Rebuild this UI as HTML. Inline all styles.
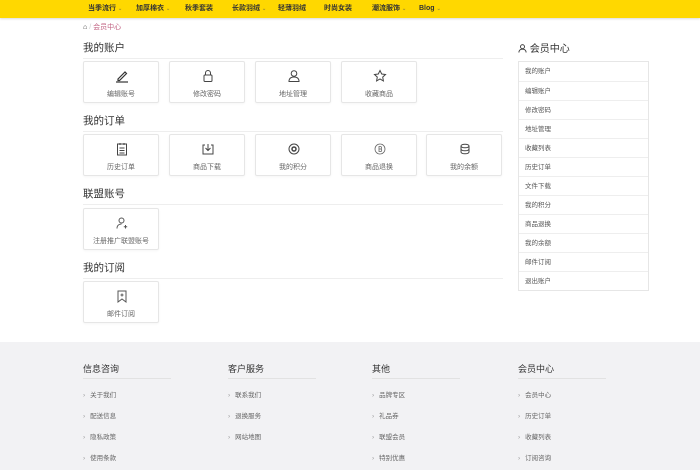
<!DOCTYPE html>
<html><head><meta charset="utf-8"><style>
*{margin:0;padding:0;box-sizing:border-box}
body{width:700px;height:470px;overflow:hidden;background:#fff;font-family:"Liberation Sans","Noto Sans CJK SC",sans-serif;color:#333;position:relative}
.nav{position:absolute;left:0;top:0;width:700px;height:18px;background:#ffd800;box-shadow:0 1px 2px rgba(0,0,0,.15)}
.nav span{position:absolute;top:4px;font-size:7px;font-weight:bold;color:#333;line-height:9px}
.nav span i{font-style:normal;color:#a08a30;font-size:5px;margin-left:2px}
.bc{position:absolute;left:83px;top:22px;font-size:7px;color:#c06080}
.h{position:absolute;left:83px;width:420px;font-size:10.5px;color:#333;border-bottom:1px solid #eee;padding-bottom:3px}
.card{position:absolute;width:76px;height:42px;border:1px solid #e6e6e6;border-radius:2px;box-shadow:0 1px 2px rgba(0,0,0,.04);text-align:center;font-size:7px;color:#666}
.card svg{position:absolute;left:31px;top:7px}
.card b{position:absolute;left:0;right:0;top:27px;font-weight:normal}
.side{position:absolute;left:518px;top:61px;width:131px;border:1px solid #e6e6e6}
.side div{height:19px;line-height:19px;border-top:1px solid #eee;font-size:6.5px;color:#555;padding-left:6px}
.side div:first-child{border-top:none}
.foot{position:absolute;left:0;top:342px;width:700px;height:128px;background:#f2f2f4}
.fc{position:absolute;top:20px;width:88px}
.fc h4{font-weight:normal;font-size:9px;color:#333;border-bottom:1px solid #e2e2e2;padding-bottom:6px;height:17px}
.fc p{font-size:6.5px;color:#666;margin-top:9px;height:12px;line-height:12px}
.fc p:first-of-type{margin-top:11px}
.fc p:before{content:"›";color:#999;margin-right:5px}
</style></head><body>
<div class="nav">
<span style="left:88px">当季流行<i>⌄</i></span>
<span style="left:136px">加厚棉衣<i>⌄</i></span>
<span style="left:185px">秋季套装</span>
<span style="left:232px">长款羽绒<i>⌄</i></span>
<span style="left:278px">轻薄羽绒</span>
<span style="left:324px">时尚女装</span>
<span style="left:372px">潮流服饰<i>⌄</i></span>
<span style="left:419px">Blog<i>⌄</i></span>
</div>
<div class="bc"><span style="color:#333">⌂</span> <span style="color:#ccc">/</span> 会员中心</div>

<div class="h" style="top:40px">我的账户</div>
<div class="card" style="left:83px;top:61px"><svg width="14" height="14" viewBox="0 0 14 14" fill="none" stroke="#333" stroke-width="1.2"><path d="M3 10l7-7 1.5 1.5-7 7H3z"/><path d="M1 13h12"/></svg><b>编辑账号</b></div>
<div class="card" style="left:169px;top:61px"><svg width="14" height="14" viewBox="0 0 14 14" fill="none" stroke="#444"><rect x="3" y="6" width="8" height="6.5" rx="1"/><path d="M4.5 6V4a2.5 2.5 0 015 0v2"/></svg><b>修改密码</b></div>
<div class="card" style="left:255px;top:61px"><svg width="14" height="14" viewBox="0 0 14 14" fill="none" stroke="#444"><circle cx="7" cy="4.5" r="2.8"/><path d="M2 12.5c0-3 2-4.5 5-4.5s5 1.5 5 4.5z"/></svg><b>地址管理</b></div>
<div class="card" style="left:341px;top:61px"><svg width="14" height="14" viewBox="0 0 14 14" fill="none" stroke="#444"><path d="M7 1.5l1.7 3.5 3.8.5-2.8 2.6.7 3.8L7 10l-3.4 1.9.7-3.8L1.5 5.5l3.8-.5z"/></svg><b>收藏商品</b></div>

<div class="h" style="top:113px">我的订单</div>
<div class="card" style="left:83px;top:134px"><svg width="14" height="14" viewBox="0 0 14 14" fill="none" stroke="#444"><rect x="2.5" y="2" width="9" height="11"/><path d="M5 1v2M9 1v2M4.5 6h5M4.5 8.5h5M4.5 11h5"/></svg><b>历史订单</b></div>
<div class="card" style="left:169px;top:134px"><svg width="14" height="14" viewBox="0 0 14 14" fill="none" stroke="#444"><path d="M4 3H2v9h10V3h-2"/><path d="M7 2v6M4.5 6L7 8.5 9.5 6"/></svg><b>商品下载</b></div>
<div class="card" style="left:255px;top:134px"><svg width="14" height="14" viewBox="0 0 14 14" fill="none" stroke="#444"><circle cx="7" cy="7" r="5"/><circle cx="7" cy="7" r="2" stroke-width="1.5"/></svg><b>我的积分</b></div>
<div class="card" style="left:341px;top:134px"><svg width="14" height="14" viewBox="0 0 14 14" fill="none" stroke="#666" stroke-width=".8"><circle cx="7" cy="7" r="5"/><path d="M6 4.5v5h1.5a1.2 1.2 0 000-2.5H6h1.3a1.2 1.2 0 000-2.5z"/></svg><b>商品退换</b></div>
<div class="card" style="left:426px;top:134px"><svg width="14" height="14" viewBox="0 0 14 14" fill="none" stroke="#444"><ellipse cx="7" cy="4" rx="4" ry="1.8"/><path d="M3 4v6c0 1 1.8 1.8 4 1.8s4-.8 4-1.8V4M3 7c0 1 1.8 1.8 4 1.8S11 8 11 7"/></svg><b>我的余额</b></div>

<div class="h" style="top:186px">联盟账号</div>
<div class="card" style="left:83px;top:208px"><svg width="14" height="14" viewBox="0 0 14 14" fill="none" stroke="#555"><circle cx="6.5" cy="4.5" r="2.5"/><path d="M2 12.5c0-3 2-4.5 4.5-4.5M10.5 9v3.5M8.8 10.8h3.4"/></svg><b>注册推广联盟账号</b></div>

<div class="h" style="top:260px">我的订阅</div>
<div class="card" style="left:83px;top:281px"><svg width="14" height="14" viewBox="0 0 14 14" fill="none" stroke="#555"><path d="M3 2h8v11L7 10l-4 3z"/><path d="M7 4.5v3M5.5 6h3"/></svg><b>邮件订阅</b></div>

<div style="position:absolute;left:518px;top:40px;font-size:10px;color:#333"><svg width="9" height="9" viewBox="0 0 10 10" fill="none" stroke="#333" style="vertical-align:-1px"><circle cx="5" cy="3" r="2.2"/><path d="M1 9.5c0-2.5 1.8-3.8 4-3.8s4 1.3 4 3.8"/></svg> 会员中心</div>
<div class="side">
<div>我的账户</div><div>编辑账户</div><div>修改密码</div><div>地址管理</div><div>收藏列表</div><div>历史订单</div><div>文件下载</div><div>我的积分</div><div>商品退换</div><div>我的余额</div><div>邮件订阅</div><div>退出账户</div>
</div>

<div class="foot">
<div class="fc" style="left:83px"><h4>信息咨询</h4><p>关于我们</p><p>配送信息</p><p>隐私政策</p><p>使用条款</p></div>
<div class="fc" style="left:228px"><h4>客户服务</h4><p>联系我们</p><p>退换服务</p><p>网站地图</p></div>
<div class="fc" style="left:372px"><h4>其他</h4><p>品牌专区</p><p>礼品券</p><p>联盟会员</p><p>特别优惠</p></div>
<div class="fc" style="left:518px"><h4>会员中心</h4><p>会员中心</p><p>历史订单</p><p>收藏列表</p><p>订阅咨询</p></div>
</div>
</body></html>
